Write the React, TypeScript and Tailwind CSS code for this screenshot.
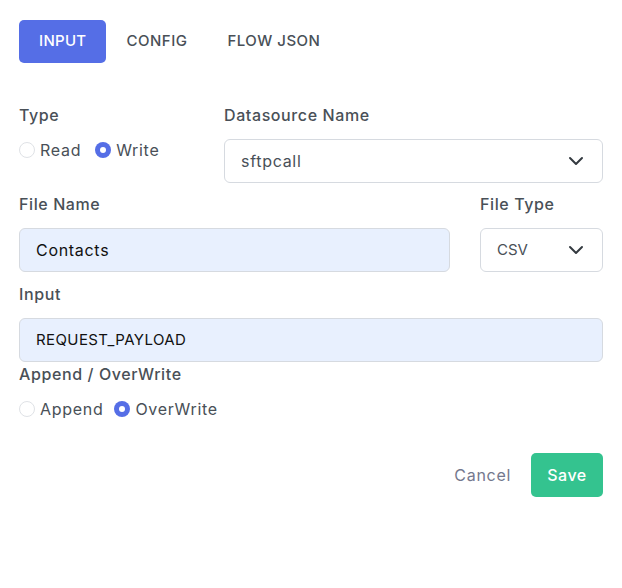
import React from "react";

const font = { fontFamily: "Inter, 'Noto Sans', sans-serif" };

function Chevron() {
  return (
    <svg width="16" height="12" viewBox="0 0 16 12" className="shrink-0">
      <path d="M2 3l6 6 6-6" fill="none" stroke="#343a40" strokeWidth="2" strokeLinecap="round" strokeLinejoin="round" />
    </svg>
  );
}

function Radio({ checked, label }: { checked?: boolean; label: string }) {
  return (
    <label className="flex items-center gap-[5px] h-[22px]">
      {checked ? (
        <span className="w-4 h-4 rounded-full bg-[#556ee6] flex items-center justify-center">
          <span className="w-[6px] h-[6px] rounded-full bg-white" />
        </span>
      ) : (
        <span className="w-4 h-4 rounded-full border border-[#dfe2e6] bg-white" />
      )}
      <span className="text-[16px] tracking-[0.7px] text-[#495057]">{label}</span>
    </label>
  );
}

function Label({ children, mb = true }: { children: React.ReactNode; mb?: boolean }) {
  return (
    <div className={`text-[16px] tracking-[0.6px] font-medium text-[#495057] h-[22px] leading-[22px] ${mb ? "mb-[13px]" : ""}`}>
      {children}
    </div>
  );
}

export default function App() {
  return (
    <div className="w-[622px] h-[588px] bg-white px-[19px] pt-[20px]" style={font}>
      <div className="flex">
        <button className="h-[43px] px-5 rounded-[5px] bg-[#556ee6] text-white text-[15px] tracking-[0.3px] font-medium">INPUT</button>
        <button className="h-[43px] px-5 text-[#495057] text-[15px] tracking-[0.5px] font-medium">CONFIG</button>
        <button className="h-[43px] px-5 text-[#495057] text-[15px] tracking-[0.5px] font-medium">FLOW JSON</button>
      </div>

      <div className="grid grid-cols-[175px_1fr] gap-x-[30px] mt-[41px]">
        <div>
          <Label>Type</Label>
          <div className="flex gap-[14px]">
            <Radio label="Read" />
            <Radio checked label="Write" />
          </div>
        </div>
        <div>
          <Label>Datasource Name</Label>
          <div className="h-[44px] border border-[#d6dae0] rounded-[6px] flex items-center justify-between pl-4 pr-[18px] text-[16px] tracking-[0.7px] text-[#495057]">
            <span>sftpcall</span>
            <Chevron />
          </div>
        </div>
      </div>

      <div className="grid grid-cols-[1fr_123px] gap-x-[30px] mt-[10px]">
        <div>
          <Label>File Name</Label>
          <div className="h-[44px] border border-[#d6dae0] rounded-[6px] bg-[#e8f0fe] flex items-center pl-4 text-[16px] tracking-[0.7px] text-[#111]">
            Contacts
          </div>
        </div>
        <div>
          <Label>File Type</Label>
          <div className="h-[44px] border border-[#d6dae0] rounded-[6px] flex items-center justify-between pl-4 pr-[18px] text-[15px] text-[#495057]">
            <span>CSV</span>
            <Chevron />
          </div>
        </div>
      </div>

      <div className="mt-[11px]">
        <Label>Input</Label>
        <div className="h-[44px] border border-[#d6dae0] rounded-[6px] bg-[#e8f0fe] flex items-center pl-4 text-[15px] tracking-[0.4px] text-[#111]">
          REQUEST_PAYLOAD
        </div>
      </div>

      <div className="mt-[1px]">
        <Label mb={false}>Append / OverWrite</Label>
        <div className="flex gap-[11px] mt-[13px]">
          <Radio label="Append" />
          <Radio checked label="OverWrite" />
        </div>
      </div>

      <div className="flex justify-end items-center mt-[33px]">
        <button className="h-[44px] px-5 text-[16px] tracking-[0.7px] text-[#74788d]">Cancel</button>
        <button className="h-[44px] w-[72px] rounded-[5px] bg-[#34c38f] text-white text-[16px] tracking-[0.5px] font-medium">Save</button>
      </div>
    </div>
  );
}
